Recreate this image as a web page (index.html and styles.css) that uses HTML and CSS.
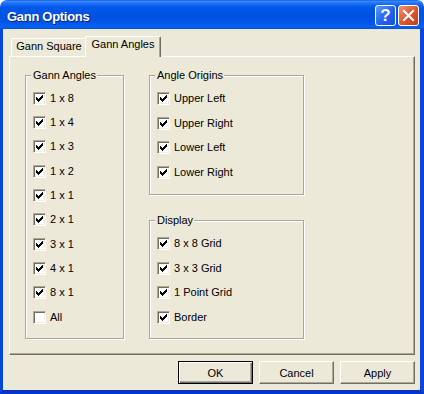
FILE: index.html
```html
<!DOCTYPE html>
<html lang="en">

<head>
    <meta charset="UTF-8">
    <title>Gann Options</title>
    <link rel="stylesheet" href="styles.css">
</head>

<body>
    <svg class="defs" width="0" height="0">
        <symbol id="tick" viewBox="0 0 11 11">
            <path d="M2 4h1v3h-1z M3 5h1v3h-1z M4 6h1v3h-1z M5 5h1v3h-1z M6 4h1v3h-1z M7 3h1v3h-1z M8 2h1v3h-1z" fill="#000" />
        </symbol>
    </svg>

    <div class="window">
        <div class="titlebar">
            <span class="title">Gann Options</span>
            <div class="caption-buttons">
                <span class="cap-btn help">?</span>
                <span class="cap-btn close">
                    <svg width="19" height="19" viewBox="0 0 19 19">
                        <path d="M5 5L14 14M14 5L5 14" stroke="#fff" stroke-width="2.2" stroke-linecap="square" />
                    </svg>
                </span>
            </div>
        </div>

        <div class="client">
            <div class="tabs">
                <div class="tab">Gann Square</div>
                <div class="tab selected">Gann Angles</div>
            </div>

            <div class="panel">
                <fieldset class="group angles">
                    <legend>Gann Angles</legend>
                    <label class="check"><span class="box"><svg><use href="#tick" /></svg></span>1 x 8</label>
                    <label class="check"><span class="box"><svg><use href="#tick" /></svg></span>1 x 4</label>
                    <label class="check"><span class="box"><svg><use href="#tick" /></svg></span>1 x 3</label>
                    <label class="check"><span class="box"><svg><use href="#tick" /></svg></span>1 x 2</label>
                    <label class="check"><span class="box"><svg><use href="#tick" /></svg></span>1 x 1</label>
                    <label class="check"><span class="box"><svg><use href="#tick" /></svg></span>2 x 1</label>
                    <label class="check"><span class="box"><svg><use href="#tick" /></svg></span>3 x 1</label>
                    <label class="check"><span class="box"><svg><use href="#tick" /></svg></span>4 x 1</label>
                    <label class="check"><span class="box"><svg><use href="#tick" /></svg></span>8 x 1</label>
                    <label class="check"><span class="box"></span>All</label>
                </fieldset>

                <div class="right-col">
                    <fieldset class="group origins">
                        <legend>Angle Origins</legend>
                        <label class="check"><span class="box"><svg><use href="#tick" /></svg></span>Upper Left</label>
                        <label class="check"><span class="box"><svg><use href="#tick" /></svg></span>Upper Right</label>
                        <label class="check"><span class="box"><svg><use href="#tick" /></svg></span>Lower Left</label>
                        <label class="check"><span class="box"><svg><use href="#tick" /></svg></span>Lower Right</label>
                    </fieldset>

                    <fieldset class="group display">
                        <legend>Display</legend>
                        <label class="check"><span class="box"><svg><use href="#tick" /></svg></span>8 x 8 Grid</label>
                        <label class="check"><span class="box"><svg><use href="#tick" /></svg></span>3 x 3 Grid</label>
                        <label class="check"><span class="box"><svg><use href="#tick" /></svg></span>1 Point Grid</label>
                        <label class="check"><span class="box"><svg><use href="#tick" /></svg></span>Border</label>
                    </fieldset>
                </div>
            </div>

            <div class="buttons">
                <button class="btn default">OK</button>
                <button class="btn">Cancel</button>
                <button class="btn">Apply</button>
            </div>
        </div>
    </div>
</body>

</html>
```

FILE: styles.css
```css
* {
    box-sizing: border-box;
    margin: 0;
    padding: 0;
}

body {
    background-color: #ffffff;
    font-family: 'Liberation Sans', Arial, sans-serif;
    font-size: 11px;
    color: #000;
}

.defs {
    position: absolute;
}

.window {
    width: 424px;
    height: 394px;
    display: flex;
    flex-direction: column;
}

/* title bar */

.titlebar {
    height: 29px;
    display: flex;
    align-items: flex-start;
    padding: 4px 5px 0 7px;
    border-radius: 7px 7px 0 0;
    background: linear-gradient(to bottom, #0A5AE6 0%, #3A8CFD 4%, #2474F8 10%, #0058E8 25%, #0052E0 55%, #0057EA 82%, #0264F6 92%, #0050DA 100%);
}

.title {
    line-height: 25px;
    font-size: 13px;
    font-weight: bold;
    letter-spacing: -0.3px;
    color: #fff;
    text-shadow: 1px 1px 0 #0A1E8A;
}

.caption-buttons {
    margin-left: auto;
    margin-top: 1px;
    display: flex;
    gap: 2px;
}

.cap-btn {
    width: 21px;
    height: 21px;
    border: 1px solid #fff;
    border-radius: 3px;
    display: flex;
    align-items: center;
    justify-content: center;
}

.help {
    background: linear-gradient(to bottom right, #5A9BFF, #2262EE 55%, #1A50D8);
    color: #fff;
    font-size: 17px;
    font-weight: bold;
    line-height: 19px;
}

.close {
    background: linear-gradient(to bottom right, #F09070, #E0532C 55%, #C43A1A);
}

/* client area */

.client {
    flex: 1;
    display: flex;
    flex-direction: column;
    background-color: #ECE9D8;
    border-left: 3px solid #0846DC;
    border-right: 4px solid #0846DC;
    border-bottom: 4px solid #0636C8;
}

.tabs {
    display: flex;
    align-items: flex-end;
    height: 27px;
    padding-left: 8px;
}

.tab {
    width: 76px;
    height: 18px;
    line-height: 14px;
    text-align: center;
    border-top: 1px solid #fff;
    border-left: 1px solid #fff;
    border-right: 1px solid #716F64;
    border-radius: 2px 2px 0 0;
    box-shadow: inset -1px 0 0 #ACA899;
}

.tab.selected {
    position: relative;
    z-index: 1;
    height: 21px;
    margin-left: -2px;
    margin-bottom: -1px;
    background-color: #ECE9D8;
}

.panel {
    width: 406px;
    height: 299px;
    margin-left: 6px;
    display: flex;
    align-items: flex-start;
    padding: 12px 0 0 15px;
    border-top: 1px solid #fff;
    border-left: 1px solid #fff;
    border-right: 1px solid #716F64;
    border-bottom: 1px solid #716F64;
    box-shadow: inset -1px -1px 0 #ACA899;
}

/* group boxes */

.group {
    min-width: 0;
    padding: 4px 7px 0;
    border: 1px solid #ACA899;
    box-shadow: inset 1px 1px 0 #fff, 1px 1px 0 #fff;
}

.group legend {
    margin-left: -2px;
    padding: 0 1px 0 2px;
    line-height: 13px;
    background-color: #ECE9D8;
}

.angles {
    width: 99px;
    height: 270px;
}

.right-col {
    width: 155px;
    margin-left: 25px;
    display: flex;
    flex-direction: column;
    gap: 19px;
}

.origins {
    height: 126px;
}

.display {
    height: 125px;
}

.check {
    display: flex;
    align-items: center;
    height: 24.33px;
    line-height: 13px;
}

.origins .check,
.display .check {
    height: 24.75px;
}

.box {
    width: 13px;
    height: 13px;
    margin-right: 4px;
    flex-shrink: 0;
    background-color: #fff;
    border: 1px solid;
    border-color: #ACA899 #fff #fff #ACA899;
    box-shadow: inset 1px 1px 0 #716F64, inset -1px -1px 0 #F1EFE2;
}

.box svg {
    display: block;
    width: 11px;
    height: 11px;
    shape-rendering: crispEdges;
}

/* dialog buttons */

.buttons {
    display: flex;
    justify-content: flex-end;
    gap: 6px;
    margin-top: 6px;
    padding-right: 5px;
}

.btn {
    width: 75px;
    height: 23px;
    font-family: 'Liberation Sans', Arial, sans-serif;
    font-size: 11px;
    color: #000;
    background-color: #ECE9D8;
    border: 1px solid;
    border-color: #fff #716F64 #716F64 #fff;
    box-shadow: inset -1px -1px 0 #ACA899;
}

.btn.default {
    border-color: #000;
    box-shadow: inset 1px 1px 0 #fff, inset -1px -1px 0 #716F64, inset -2px -2px 0 #ACA899;
}
```
